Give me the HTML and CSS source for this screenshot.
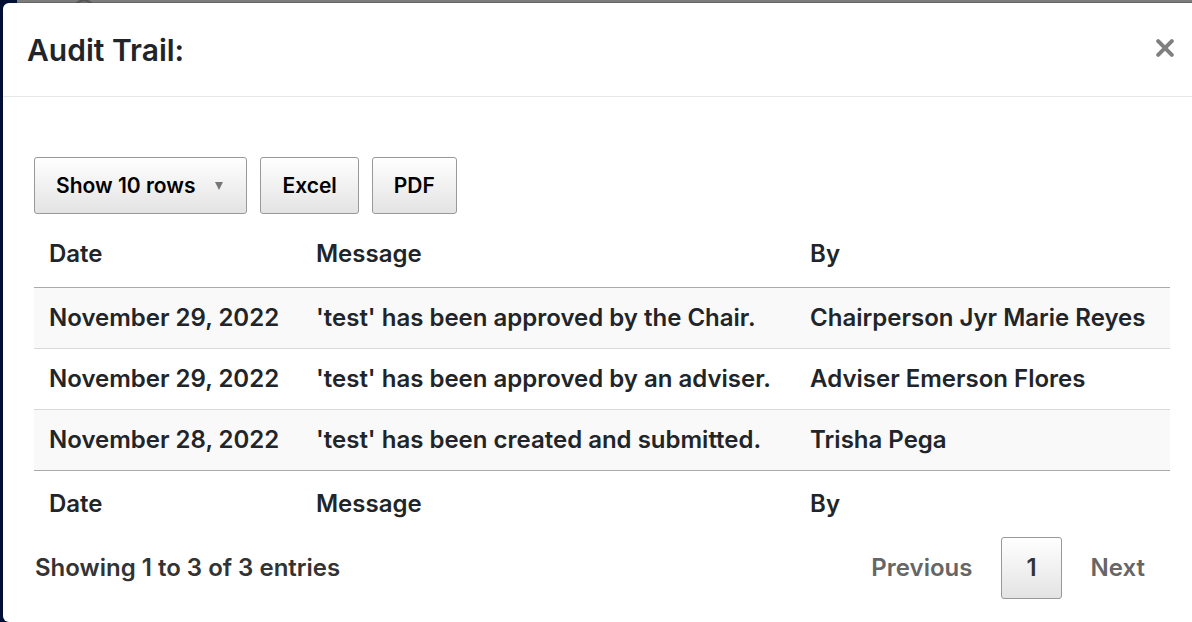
FILE: index.html
```html
<!DOCTYPE html>
<html lang="en">
<head>
<meta charset="utf-8">
<title>Audit Trail</title>
<link rel="stylesheet" href="styles.css">
</head>
<body>
<main class="modal" role="dialog" aria-labelledby="title">
  <header class="modal-header">
    <h1 class="modal-title" id="title">Audit Trail:</h1>
    <button class="close" type="button" aria-label="Close">
      <svg class="close-icon" viewBox="0 0 18 18" aria-hidden="true"><path d="M2.2 2.2 15.8 15.8M15.8 2.2 2.2 15.8"/></svg>
    </button>
  </header>
  <section class="modal-body">
    <div class="toolbar">
      <button class="btn" type="button" aria-haspopup="true">Show 10 rows <svg class="caret" viewBox="0 0 8 8" aria-hidden="true"><path d="M0 0H8L4 8Z"/></svg></button>
      <button class="btn" type="button">Excel</button>
      <button class="btn" type="button">PDF</button>
    </div>
    <table class="audit">
      <colgroup><col class="col-date"><col class="col-message"><col class="col-by"></colgroup>
      <thead><tr><th scope="col">Date</th><th scope="col">Message</th><th scope="col">By</th></tr></thead>
      <tbody>
        <tr><td>November 29, 2022</td><td>'test' has been approved by the Chair.</td><td>Chairperson Jyr Marie Reyes</td></tr>
        <tr><td>November 29, 2022</td><td>'test' has been approved by an adviser.</td><td>Adviser Emerson Flores</td></tr>
        <tr><td>November 28, 2022</td><td>'test' has been created and submitted.</td><td>Trisha Pega</td></tr>
      </tbody>
      <tfoot><tr><th scope="col">Date</th><th scope="col">Message</th><th scope="col">By</th></tr></tfoot>
    </table>
    <div class="table-footer">
      <p class="info">Showing 1 to 3 of 3 entries</p>
      <nav class="pages" aria-label="Pagination">
        <a class="page disabled" href="#">Previous</a>
        <a class="page current" href="#" aria-current="page">1</a>
        <a class="page disabled" href="#">Next</a>
      </nav>
    </div>
  </section>
</main>
</body>
</html>
```
FILE: styles.css
```css
* { box-sizing: border-box; }

body {
  margin: 0;
  padding: 3px 0 0 3px;
  background:
    radial-gradient(circle at 12px 12px, transparent 10px, #555 11px, #555 12px, transparent 13px) 72px 0 / 24px 3px no-repeat,
    linear-gradient(#666, #666) 17px 2px / 100% 1px no-repeat,
    linear-gradient(#7c7c7c, #7c7c7c) 17px 0 / 100% 2px no-repeat,
    #000f33;
  color: #212529;
  font: 600 24px/36px Inter, "Liberation Sans", sans-serif;
}

.modal {
  background: #fff;
  border-radius: 6px 0 0 6px;
}

.modal-header {
  display: flex;
  justify-content: space-between;
  align-items: flex-start;
  padding: 25px 16px 23px 24px;
  border-bottom: 1px solid #e5e8eb;
}

.modal-title {
  margin: 0;
  font-size: 30px;
  font-weight: 600;
  line-height: 45px;
}

.close {
  display: flex;
  margin: 11px 0 0;
  padding: 0;
  border: 0;
  background: none;
}

.close-icon {
  width: 22px;
  height: 18px;
  fill: none;
  stroke: #808080;
  stroke-width: 4;
  stroke-linecap: round;
}

.modal-body { padding: 60px 22px 23px 31px; }

.toolbar {
  display: flex;
  gap: 13px;
  margin-bottom: 12px;
}

.btn,
.current {
  border: 1px solid #999;
  border-radius: 3px;
  background: linear-gradient(#fff, #e3e3e3);
}

.btn {
  display: flex;
  align-items: center;
  gap: 20px;
  padding: 10px 21px;
  color: #000;
  font: inherit;
  font-size: 21px;
  line-height: 35px;
}

.caret {
  width: 8px;
  height: 8px;
  margin-right: 2px;
  fill: #777;
}

.audit {
  width: 100%;
  border-collapse: separate;
  border-spacing: 0;
  table-layout: fixed;
}

.col-date { width: 23.5%; }
.col-message { width: 43.5%; }

.audit th,
.audit td {
  padding: 12px 15px;
  text-align: left;
  font-weight: 600;
}

.audit thead th {
  padding-top: 10px;
  padding-bottom: 15px;
  border-bottom: 1px solid #aaa;
}

.audit tbody tr:nth-child(odd) { background: #f9f9f9; }
.audit tbody tr + tr td { border-top: 1px solid #d9d9d9; }

.audit tfoot th {
  padding-top: 15px;
  padding-bottom: 10px;
  border-top: 1px solid #aaa;
}

.table-footer {
  display: flex;
  justify-content: space-between;
  align-items: center;
  margin-top: 5px;
  color: #333;
}

.info { margin: 0 1px; }

.pages {
  display: flex;
  gap: 4px;
}

.page {
  padding: 12px 24px;
  border: 1px solid transparent;
  border-radius: 3px;
  color: #333;
  text-decoration: none;
}

.page.current { border-color: #999; }
.page.disabled { color: #666; }
```
